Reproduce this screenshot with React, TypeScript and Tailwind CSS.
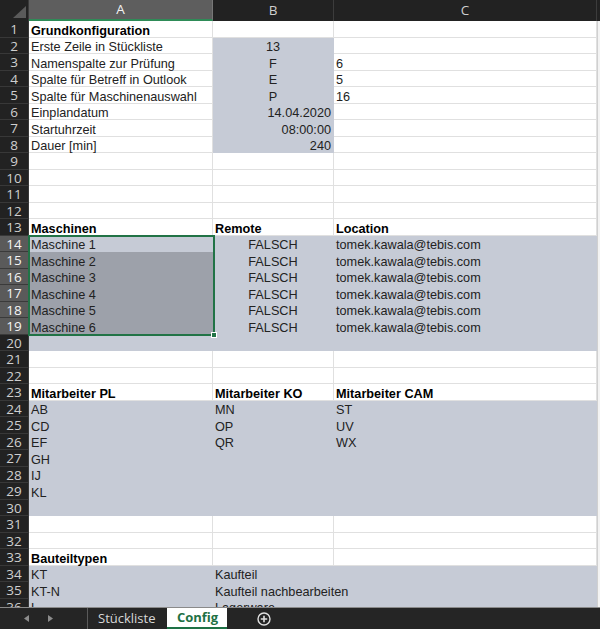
import React from "react";

type Cell = { t?: string; b?: boolean; al?: "l" | "c" | "r"; s?: boolean; sel?: boolean; ov?: boolean };
type Row = { n: number; a: Cell; bcol: Cell; c: Cell; hsel?: boolean };

const e: Cell = {};
const sh: Cell = { s: true };

function buildRows(): Row[] {
  const rows: Row[] = [];
  const push = (n: number, a: Cell, bcol: Cell, c: Cell, hsel = false) => rows.push({ n, a, bcol, c, hsel });
  push(1, { t: "Grundkonfiguration", b: true }, e, e);
  push(2, { t: "Erste Zeile in Stückliste" }, { t: "13", al: "c", s: true }, e);
  push(3, { t: "Namenspalte zur Prüfung" }, { t: "F", al: "c", s: true }, { t: "6" });
  push(4, { t: "Spalte für Betreff in Outlook" }, { t: "E", al: "c", s: true }, { t: "5" });
  push(5, { t: "Spalte für Maschinenauswahl" }, { t: "P", al: "c", s: true }, { t: "16" });
  push(6, { t: "Einplandatum" }, { t: "14.04.2020", al: "r", s: true }, e);
  push(7, { t: "Startuhrzeit" }, { t: "08:00:00", al: "r", s: true }, e);
  push(8, { t: "Dauer [min]" }, { t: "240", al: "r", s: true }, e);
  for (let i = 9; i <= 12; i++) push(i, e, e, e);
  push(13, { t: "Maschinen", b: true }, { t: "Remote", b: true }, { t: "Location", b: true });
  for (let i = 1; i <= 6; i++)
    push(
      13 + i,
      { t: `Maschine ${i}`, s: true, sel: i > 1 },
      { t: "FALSCH", al: "c", s: true },
      { t: "tomek.kawala@tebis.com", s: true },
      true
    );
  push(20, sh, sh, sh);
  push(21, e, e, e);
  push(22, e, e, e);
  push(23, { t: "Mitarbeiter PL", b: true }, { t: "Mitarbeiter KO", b: true }, { t: "Mitarbeiter CAM", b: true });
  const pl = ["AB", "CD", "EF", "GH", "IJ", "KL"];
  const ko = ["MN", "OP", "QR"];
  const cam = ["ST", "UV", "WX"];
  for (let i = 0; i < 6; i++)
    push(24 + i, { t: pl[i], s: true }, { t: ko[i], s: true }, { t: cam[i], s: true });
  push(30, sh, sh, sh);
  push(31, e, e, e);
  push(32, e, e, e);
  push(33, { t: "Bauteiltypen", b: true }, e, e);
  push(34, { t: "KT", s: true }, { t: "Kaufteil", s: true }, sh);
  push(35, { t: "KT-N", s: true }, { t: "Kaufteil nachbearbeiten", s: true, ov: true }, sh);
  push(36, { t: "L", s: true }, { t: "Lagerware", s: true }, sh);
  return rows;
}

function CellView({ c, w }: { c: Cell; w: string }) {
  const bg = c.sel
    ? "bg-[#9da1aa] border-[#9da1aa]"
    : c.s
    ? "bg-[#c6cbd6] border-[#c6cbd6]"
    : "bg-white border-[#e0e0e0]";
  const al =
    c.al === "c" ? "justify-center" : c.al === "r" ? "justify-end pr-[2px]" : "justify-start pl-[2px]";
  return (
    <div className={`${w} shrink-0 h-full flex items-end border-r border-b ${bg} ${al}`}>
      {c.t && (
        <span
          className={`relative z-10 top-[1px] whitespace-nowrap leading-[14px] text-[12.7px] text-[#222222] ${
            c.b ? "font-bold text-black" : ""
          }`}
        >
          {c.t}
        </span>
      )}
    </div>
  );
}

export default function App() {
  const rows = buildRows();
  return (
    <div
      className="w-[600px] h-[629px] flex flex-col overflow-hidden bg-white"
      style={{ fontFamily: '"Liberation Sans", Arial, sans-serif' }}
    >
      <div className="relative h-[607px] shrink-0 overflow-hidden flex flex-col">
        {/* column headers */}
        <div
          className="h-[21px] shrink-0 flex bg-[#222222] text-[#cfcfcf] text-[13.5px]"
          style={{ fontFamily: '"Open Sans", "Noto Sans", sans-serif' }}
        >
          <div className="w-[29px] shrink-0 h-full relative border-r border-[#3a3a3a]">
            <svg className="absolute left-[13px] top-[6px]" width="13" height="12" viewBox="0 0 13 12">
              <polygon points="13,0 13,12 0,12" fill="#5a5a5a" />
            </svg>
          </div>
          <div className="w-[184px] shrink-0 h-full flex items-center justify-center bg-[#5e5e5e] text-[#f2f2f2] border-b-2 border-[#2e8b57] border-r border-r-[#777777]">
            A
          </div>
          <div className="w-[121px] shrink-0 h-full flex items-center justify-center border-r border-[#3c3c3c]">
            B
          </div>
          <div className="w-[263px] shrink-0 h-full flex items-center justify-center border-r border-[#3c3c3c]">
            C
          </div>
          <div className="flex-1" />
        </div>
        {rows.map((r) => (
          <div key={r.n} className="h-[16.5px] shrink-0 flex">
            <div
              className={`w-[29px] shrink-0 h-full flex items-center justify-center text-[13.5px] leading-none border-b border-r ${
                r.hsel
                  ? "bg-[#5a5a5a] text-[#f4f4f4] border-[#3a3a3a]"
                  : "bg-[#222222] text-[#cfcfcf] border-[#383838]"
              }`}
              style={{ fontFamily: '"Open Sans", "Noto Sans", sans-serif' }}
            >
              <span className="relative top-[1px]">{r.n}</span>
            </div>
            <CellView c={r.a} w="w-[184px]" />
            <CellView c={r.bcol} w="w-[121px]" />
            <CellView c={r.c} w="w-[263px]" />
            <div className="flex-1 h-full bg-[#f3f3f3] border-l border-[#d0d0d0]" />
          </div>
        ))}
        {/* selection border */}
        <div className="absolute left-[28px] top-[235px] w-[187px] h-[101px] border-2 border-[#217346] pointer-events-none">
          <div className="absolute right-[-4px] bottom-[-4px] w-[6px] h-[6px] bg-[#217346] border border-white" />
        </div>
      </div>
      {/* sheet tabs */}
      <div
        className="h-[22px] shrink-0 flex items-center bg-[#252525] border-t border-[#8a8a8a] text-[13px]"
        style={{ fontFamily: '"Open Sans", "Noto Sans", sans-serif' }}
      >
        <div className="w-[88px] shrink-0 h-full flex items-center border-r border-[#5a5a5a]">
          <svg className="ml-[24px]" width="5" height="7" viewBox="0 0 5 7">
            <polygon points="5,0 5,7 0,3.5" fill="#8c8c8c" />
          </svg>
          <svg className="ml-[19px]" width="5" height="7" viewBox="0 0 5 7">
            <polygon points="0,0 0,7 5,3.5" fill="#8c8c8c" />
          </svg>
        </div>
        <div className="pl-[10px] pr-[12px] text-[#d8d8d8]">Stückliste</div>
        <div className="h-full w-[60px] bg-white flex items-center justify-center font-bold text-[#1e7145] border-b-2 border-[#1e7145]">
          Config
        </div>
        <svg className="ml-[30px]" width="14" height="14" viewBox="0 0 14 14">
          <circle cx="7" cy="7" r="6" fill="none" stroke="#e0e0e0" strokeWidth="1.4" />
          <path d="M7 3.8v6.4M3.8 7h6.4" stroke="#e0e0e0" strokeWidth="1.6" />
        </svg>
      </div>
    </div>
  );
}
